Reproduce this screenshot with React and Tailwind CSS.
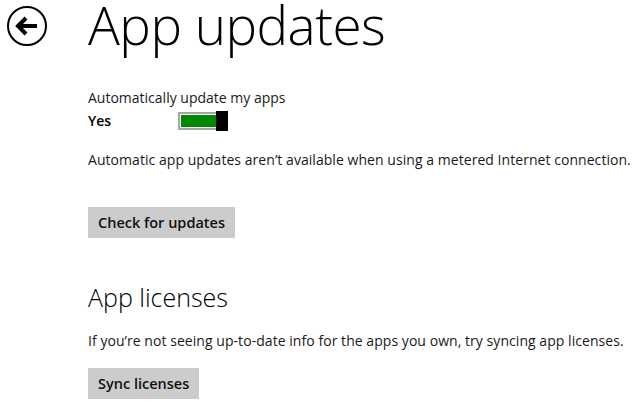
import React, { useState } from "react";

const font = { fontFamily: '"Open Sans", "Noto Sans", sans-serif' };

const BackButton = () => (
  <button className="mt-[6px] ml-[7px] w-[40px] h-[40px] shrink-0">
    <svg width="40" height="40" viewBox="0 0 40 40">
      <circle cx="20" cy="20" r="19" fill="none" stroke="#000" strokeWidth="2" />
      <path
        d="M11 20 H30 M19 12 L11 20 L19 28"
        fill="none"
        stroke="#000"
        strokeWidth="4"
        strokeLinecap="butt"
        strokeLinejoin="miter"
      />
    </svg>
  </button>
);

const Toggle = ({ on }) => (
  <div className="relative w-[50px] h-[20px]">
    <div className="absolute left-0 top-[1px] w-[44px] h-[18px] border-2 border-[#a6a6a6] p-[1px] bg-white">
      <div className={on ? "w-full h-full bg-[#008a00]" : "w-full h-full bg-white"} />
    </div>
    <div className="absolute right-0 top-0 w-[12px] h-[20px] bg-black" />
  </div>
);

const App = () => {
  const [auto] = useState(true);

  return (
    <div className="w-[640px] h-[409px] bg-white overflow-hidden text-black" style={font}>
      <div className="flex items-start">
        <BackButton />
        <h1 className="ml-[41px] -mt-[11px] text-[53px] leading-[72px] font-light tracking-[-0.5px]">
          App updates
        </h1>
      </div>

      <div className="pl-[88px]">
        <p className="mt-[27px] text-[14px] leading-[20px] text-[#1a1a1a]">
          Automatically update my apps
        </p>
        <div className="mt-[3px] flex items-center h-[20px]">
          <span className="w-[90px] text-[14px] leading-[20px] font-semibold">
            {auto ? "Yes" : "No"}
          </span>
          <Toggle on={auto} />
        </div>

        <p className="mt-[19px] text-[14px] leading-[20px] text-[#1a1a1a] whitespace-nowrap tracking-[0.05px]">
          Automatic app updates aren’t available when using a metered Internet connection.
        </p>

        <button className="mt-[37px] h-[31px] px-[10px] bg-[#cccccc] text-[14.5px] font-semibold text-[#111]">
          Check for updates
        </button>

        <h2 className="mt-[44px] text-[25px] leading-[30px] font-light">App licenses</h2>
        <p className="mt-[19px] text-[14px] leading-[20px] text-[#1a1a1a] whitespace-nowrap tracking-[0.05px]">
          If you’re not seeing up-to-date info for the apps you own, try syncing app licenses.
        </p>

        <button className="mt-[17px] h-[31px] px-[10px] bg-[#cccccc] text-[14.5px] font-semibold text-[#111]">
          Sync licenses
        </button>
      </div>
    </div>
  );
};

export default App;
